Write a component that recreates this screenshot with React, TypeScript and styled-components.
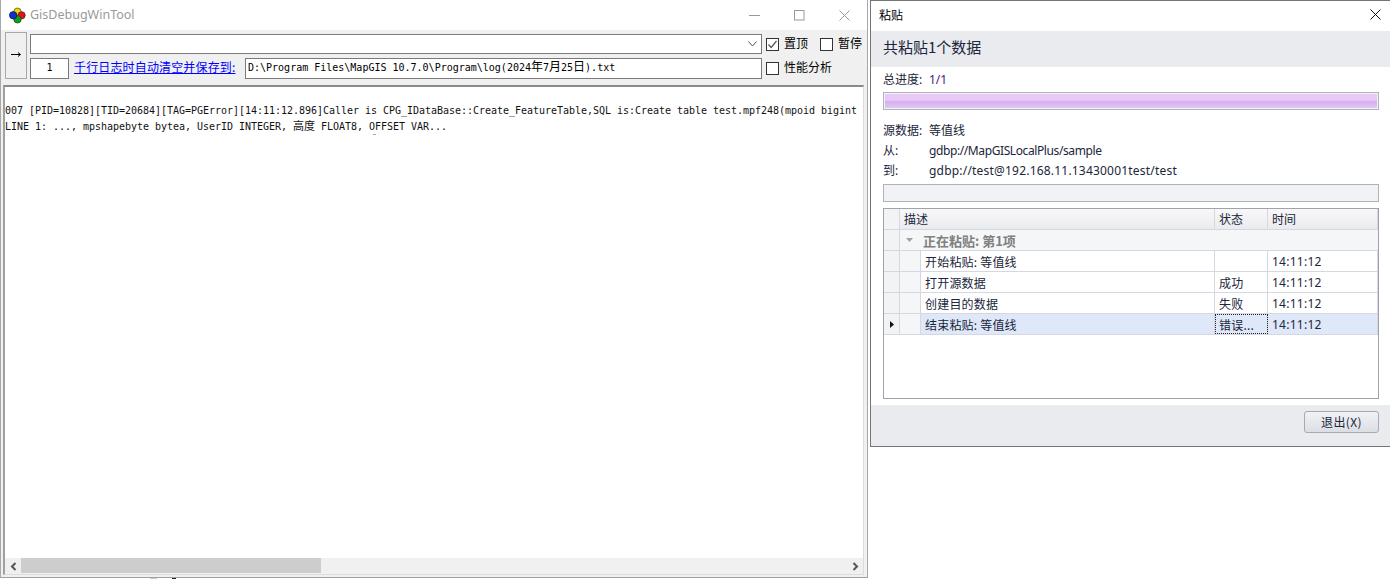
import React from "react";
import styled, { createGlobalStyle } from "styled-components";

const GlobalStyle = createGlobalStyle`
  html, body {
    margin: 0;
    padding: 0;
    background: #fff;
    overflow: hidden;
  }
  * {
    box-sizing: border-box;
  }
`;

const UI_FONT = `"Noto Sans", "Noto Sans CJK SC", sans-serif`;
const CJK_FONT = `"Noto Sans CJK SC", "Noto Sans", sans-serif`;
const MONO_FONT = `"DejaVu Sans Mono", "Noto Sans CJK SC", monospace`;

const Desktop = styled.div`
  position: relative;
  display: flex;
  align-items: flex-start;
  gap: 2px;
  width: 1390px;
  height: 579px;
  overflow: hidden;
  background: #fff;
`;

/* bits of whatever sits behind the window */
const BehindSpeck = styled.span<{ $left: number; $width: number; $color: string }>`
  position: absolute;
  top: 578px;
  left: ${(p) => p.$left}px;
  width: ${(p) => p.$width}px;
  height: 1px;
  background: ${(p) => p.$color};
`;

/* ---- debug tool window ---- */

const ToolWindow = styled.div`
  display: flex;
  flex-direction: column;
  width: 868px;
  height: 578px;
  border-left: 1px solid #a8a8a8;
  border-right: 1px solid #a8a8a8;
  border-bottom: 1px solid #a0a0a0;
  background: #f0f0f0;
  font-family: ${CJK_FONT};
`;

const TitleBar = styled.div`
  display: flex;
  align-items: center;
  flex: none;
  height: 30px;
  padding-left: 8px;
  background: #fff;
`;

const AppTitle = styled.span`
  margin-left: 4px;
  padding-bottom: 2px;
  font-family: ${UI_FONT};
  font-size: 12.5px;
  color: #9a9a9a;
`;

const WindowButtons = styled.div`
  display: flex;
  margin-left: auto;
  margin-right: 17px;
  gap: 34px;
`;

const Toolbar = styled.div`
  display: flex;
  flex: none;
  height: 55px;
  padding: 2px 0 0 4px;
  gap: 3px;
`;

const ArrowButton = styled.div`
  display: flex;
  align-items: center;
  justify-content: center;
  width: 22px;
  height: 47px;
  padding-bottom: 2px;
  border: 1px solid #a8a8a8;
  background: #f0f0f0;
`;

const ToolbarRows = styled.div`
  display: flex;
  flex-direction: column;
  gap: 4px;
  padding-top: 2px;
`;

const ToolbarRow = styled.div<{ $height: number }>`
  display: flex;
  align-items: center;
  height: ${(p) => p.$height}px;
`;

const FieldGroup = styled.div`
  display: flex;
  align-items: center;
  width: 732px;
  height: 100%;
  margin-right: 4px;
`;

const ComboBox = styled.div`
  display: flex;
  align-items: center;
  justify-content: flex-end;
  width: 100%;
  height: 100%;
  padding-right: 4px;
  border: 1px solid #7a7a7a;
  background: #fff;
`;

const CountInput = styled.div`
  flex: none;
  width: 39px;
  height: 100%;
  line-height: 17px;
  text-align: center;
  border: 1px solid #7a7a7a;
  background: #fff;
  font-family: ${MONO_FONT};
  font-size: 10px;
  color: #000;
`;

const SaveLink = styled.a`
  flex: none;
  width: 171px;
  margin-left: 5px;
  padding-bottom: 4px;
  font-size: 12px;
  line-height: 16px;
  letter-spacing: 0.15px;
  color: #0000ff;
  text-decoration: underline;
`;

const PathInput = styled.div`
  flex: 1;
  height: 100%;
  padding-left: 2px;
  line-height: 17px;
  border: 1px solid #7a7a7a;
  background: #fff;
  font-family: ${MONO_FONT};
  font-size: 10px;
  white-space: pre;
  color: #000;
`;

const CheckItem = styled.label<{ $gap?: number }>`
  display: flex;
  align-items: center;
  gap: 5px;
  margin-right: ${(p) => p.$gap ?? 0}px;
  font-size: 12px;
  color: #000;
`;

const CheckText = styled.span`
  padding-bottom: 4px;
`;

const CheckBox = styled.span`
  display: flex;
  align-items: center;
  justify-content: center;
  width: 13px;
  height: 13px;
  border: 1px solid #333;
  background: #fff;
`;

const LogFrame = styled.div`
  display: flex;
  flex-direction: column;
  flex: 1;
  min-height: 0;
  margin: 0 3px 2px 2px;
  border-top: 2px solid #8a8a8a;
  border-left: 2px solid #a0a0a0;
  border-right: 1px solid #dcdcdc;
  border-bottom: 1px solid #dcdcdc;
  background: #fff;
`;

const LogBody = styled.div`
  position: relative;
  flex: 1;
  padding-top: 16px;
  overflow: hidden;
  background: #fff;
`;

const LogLine = styled.div`
  height: 16px;
  line-height: 16px;
  font-family: ${MONO_FONT};
  font-size: 10px;
  letter-spacing: -0.02px;
  white-space: pre;
  color: #111;
`;

const CjkRun = styled.span`
  font-family: ${CJK_FONT};
  font-size: 12px;
  line-height: 1;
`;

const LogCjkRun = styled(CjkRun)`
  font-size: 11px;
`;

const LogSpeck = styled.span`
  position: absolute;
  top: 47px;
  left: 368px;
  width: 3px;
  height: 1px;
  background: #aaa;
`;

const ScrollBar = styled.div`
  display: flex;
  align-items: center;
  flex: none;
  height: 16px;
  background: #f0f0f0;
`;

const ScrollArrow = styled.div`
  display: flex;
  align-items: center;
  justify-content: center;
  flex: none;
  width: 16px;
  height: 100%;
`;

const ScrollTrack = styled.div`
  flex: 1;
  height: 100%;
  padding-bottom: 1px;
`;

const ScrollThumb = styled.div`
  width: 300px;
  height: 100%;
  background: #cdcdcd;
`;

/* ---- paste dialog ---- */

const Dialog = styled.div`
  display: flex;
  flex-direction: column;
  flex: none;
  width: 520px;
  height: 447px;
  border: 1px solid #747474;
  border-right: none;
  background: #fff;
  font-family: ${UI_FONT};
  font-size: 12px;
  color: #20263a;
`;

const DialogTitle = styled.div`
  display: flex;
  align-items: center;
  justify-content: space-between;
  flex: none;
  height: 30px;
  padding: 0 9px 3px 8px;
  font-family: ${CJK_FONT};
  font-size: 12px;
  color: #000;
`;

const Banner = styled.div`
  display: flex;
  align-items: center;
  flex: none;
  height: 36px;
  padding: 0 0 5px 12px;
  background: #e9ebef;
  font-family: ${CJK_FONT};
  font-size: 15px;
  color: #20263a;
`;

const DialogBody = styled.div`
  display: flex;
  flex-direction: column;
  flex: 1;
  padding: 3px 11px 6px 12px;
`;

const InfoLine = styled.div<{ $mt?: number }>`
  display: flex;
  height: 20px;
  margin-top: ${(p) => p.$mt ?? 0}px;
  line-height: 20px;
  white-space: pre;
`;

const InfoLabel = styled.span`
  flex: none;
  width: 46px;
`;

const ProgressCount = styled.span`
  color: #4a1a78;
`;

const InfoPath = styled.span<{ $spacing: number }>`
  letter-spacing: ${(p) => p.$spacing}px;
`;

const Progress = styled.div<{ $filled?: boolean }>`
  flex: none;
  height: 18px;
  margin-top: ${(p) => (p.$filled ? 2 : 3)}px;
  border: 1px solid #b0b2bc;
  padding: 1px;
  background: #f1f2f5;
`;

const ProgressFill = styled.div`
  height: 100%;
  background: linear-gradient(
    to bottom,
    #ebcaf9 0%,
    #e8c6f8 45%,
    #d3b0ea 55%,
    #dcbcf0 80%,
    #e4c8f4 100%
  );
`;

const GridBox = styled.div`
  flex: 1;
  margin-top: 6px;
  border: 1px solid #a0a2ac;
  background: #fff;
  font-family: ${CJK_FONT};
`;

const GridRow = styled.div<{ $selected?: boolean }>`
  display: grid;
  grid-template-columns: 16px 21px 294px 53px 1fr;
  height: 21px;
  border-bottom: 1px solid #d5d8e0;
  background: ${(p) => (p.$selected ? "#dfe8f9" : "#fff")};
`;

const HeaderRow = styled(GridRow)`
  background: linear-gradient(to bottom, #f8f8fa, #eaebee);
`;

const GroupRow = styled(GridRow)`
  grid-template-columns: 16px 1fr;
  background: #f5f6f8;
`;

const Indicator = styled.div`
  display: flex;
  align-items: center;
  justify-content: center;
  border-right: 1px solid #d5d8e0;
  background: #f2f3f5;
`;

const IndentCell = styled.div`
  border-right: 1px solid #d5d8e0;
  background: #f5f6f8;
`;

const HeaderCell = styled.div<{ $span?: number }>`
  grid-column: span ${(p) => p.$span ?? 1};
  padding-left: 4px;
  line-height: 20px;
  border-right: 1px solid #d5d8e0;
  color: #20263a;
`;

const GroupCell = styled.div`
  display: flex;
  align-items: center;
  gap: 10px;
  padding-left: 6px;
  font-size: 13px;
  font-weight: 700;
  color: #808080;
`;

const Cell = styled.div<{ $focused?: boolean; $time?: boolean }>`
  padding-left: 4px;
  line-height: 22px;
  overflow: hidden;
  white-space: nowrap;
  border-right: 1px solid #d5d8e0;
  outline: ${(p) => (p.$focused ? "1px dotted #222" : "none")};
  outline-offset: -1px;
  font-family: ${(p) => (p.$time ? UI_FONT : "inherit")};
  letter-spacing: ${(p) => (p.$time ? 0.25 : 0.2)}px;
  color: #20263a;
`;

const Footer = styled.div`
  display: flex;
  align-items: flex-start;
  justify-content: flex-end;
  flex: none;
  height: 41px;
  padding: 6px 11px 0 0;
  background: #e9ebef;
`;

const ExitButton = styled.div`
  width: 75px;
  height: 22px;
  line-height: 20px;
  text-align: center;
  border: 1px solid #a8aab2;
  border-radius: 3px;
  background: linear-gradient(to bottom, #f1f2f5, #dcdee5);
  font-family: ${CJK_FONT};
  letter-spacing: 0.4px;
  color: #20263a;
`;

const Logo = () => (
  <svg width="17" height="17" viewBox="0 0 17 17">
    <circle cx="8.5" cy="4.7" r="3.7" fill="#f2d500" stroke="#5a5a20" strokeWidth="0.8" />
    <circle cx="12.6" cy="8.3" r="3.6" fill="#e8101a" stroke="#5a2020" strokeWidth="0.8" />
    <circle cx="8.5" cy="12.3" r="3.7" fill="#0fa01a" stroke="#1a4a1a" strokeWidth="0.8" />
    <circle cx="4.2" cy="8.3" r="3.7" fill="#1230c8" stroke="#101a50" strokeWidth="0.8" />
  </svg>
);

const MinimizeIcon = () => (
  <svg width="11" height="11" viewBox="0 0 11 11" stroke="#999" fill="none">
    <path d="M0 5.5H11" />
  </svg>
);

const MaximizeIcon = () => (
  <svg width="11" height="11" viewBox="0 0 11 11" stroke="#999" fill="none">
    <rect x="0.5" y="0.5" width="9.5" height="9.5" />
  </svg>
);

const CloseIcon = ({ color = "#999" }: { color?: string }) => (
  <svg width="11" height="11" viewBox="0 0 11 11" stroke={color} fill="none">
    <path d="M0.5 0.5L10.5 10.5M10.5 0.5L0.5 10.5" />
  </svg>
);

const rows = [
  { desc: "开始粘贴: 等值线", status: "" },
  { desc: "打开源数据", status: "成功" },
  { desc: "创建目的数据", status: "失败" },
  { desc: "结束粘贴: 等值线", status: "错误...", selected: true },
];

const App: React.FC = () => {
  return (
    <Desktop>
      <GlobalStyle />
      <ToolWindow>
        <TitleBar>
          <Logo />
          <AppTitle>GisDebugWinTool</AppTitle>
          <WindowButtons>
            <MinimizeIcon />
            <MaximizeIcon />
            <CloseIcon />
          </WindowButtons>
        </TitleBar>
        <Toolbar>
          <ArrowButton>
            <svg width="12" height="7" viewBox="0 0 12 7" fill="none" stroke="#000">
              <path d="M1 3.5H10M8 1.5L10.5 3.5L8 5.5" />
            </svg>
          </ArrowButton>
          <ToolbarRows>
            <ToolbarRow $height={20}>
              <FieldGroup>
                <ComboBox>
                  <svg width="9" height="6" viewBox="0 0 9 6" fill="none" stroke="#555">
                    <path d="M0.5 0.5L4.5 5L8.5 0.5" />
                  </svg>
                </ComboBox>
              </FieldGroup>
              <CheckItem $gap={12}>
                <CheckBox>
                  <svg width="11" height="11" viewBox="0 0 11 11" fill="none" stroke="#555" strokeWidth="1.2">
                    <path d="M1.5 5.5L4.2 8.5L9.5 2" />
                  </svg>
                </CheckBox>
                <CheckText>置顶</CheckText>
              </CheckItem>
              <CheckItem>
                <CheckBox />
                <CheckText>暂停</CheckText>
              </CheckItem>
            </ToolbarRow>
            <ToolbarRow $height={21}>
              <FieldGroup>
                <CountInput>1</CountInput>
                <SaveLink>千行日志时自动清空并保存到:</SaveLink>
                <PathInput>
                  D:\Program Files\MapGIS 10.7.0\Program\log(2024<CjkRun>年</CjkRun>7<CjkRun>月</CjkRun>25<CjkRun>日</CjkRun>).txt
                </PathInput>
              </FieldGroup>
              <CheckItem>
                <CheckBox />
                <CheckText>性能分析</CheckText>
              </CheckItem>
            </ToolbarRow>
          </ToolbarRows>
        </Toolbar>
        <LogFrame>
          <LogBody>
            <LogLine>007 [PID=10828][TID=20684][TAG=PGError][14:11:12.896]Caller is CPG_IDataBase::Create_FeatureTable,SQL is:Create table test.mpf248(mpoid bigint</LogLine>
            <LogLine>
              LINE 1: ..., mpshapebyte bytea, UserID INTEGER, <LogCjkRun>高度</LogCjkRun> FLOAT8, OFFSET VAR...
            </LogLine>
            <LogSpeck />
          </LogBody>
          <ScrollBar>
            <ScrollArrow>
              <svg width="7" height="9" viewBox="0 0 7 9" fill="none" stroke="#555" strokeWidth="2">
                <path d="M5.5 1L2 4.5L5.5 8" />
              </svg>
            </ScrollArrow>
            <ScrollTrack>
              <ScrollThumb />
            </ScrollTrack>
            <ScrollArrow>
              <svg width="7" height="9" viewBox="0 0 7 9" fill="none" stroke="#555" strokeWidth="2">
                <path d="M1.5 1L5 4.5L1.5 8" />
              </svg>
            </ScrollArrow>
          </ScrollBar>
        </LogFrame>
      </ToolWindow>

      <Dialog>
        <DialogTitle>
          粘贴
          <CloseIcon color="#111" />
        </DialogTitle>
        <Banner>共粘贴1个数据</Banner>
        <DialogBody>
          <InfoLine>
            <InfoLabel>总进度:</InfoLabel>
            <ProgressCount>1/1</ProgressCount>
          </InfoLine>
          <Progress $filled>
            <ProgressFill />
          </Progress>
          <InfoLine $mt={11}>
            <InfoLabel>源数据:</InfoLabel>等值线
          </InfoLine>
          <InfoLine>
            <InfoLabel>从:</InfoLabel>
            <InfoPath $spacing={-0.4}>gdbp://MapGISLocalPlus/sample</InfoPath>
          </InfoLine>
          <InfoLine>
            <InfoLabel>到:</InfoLabel>
            <InfoPath $spacing={0.2}>gdbp://test@192.168.11.13430001test/test</InfoPath>
          </InfoLine>
          <Progress />
          <GridBox>
            <HeaderRow>
              <Indicator />
              <HeaderCell $span={2}>描述</HeaderCell>
              <HeaderCell>状态</HeaderCell>
              <HeaderCell>时间</HeaderCell>
            </HeaderRow>
            <GroupRow>
              <Indicator />
              <GroupCell>
                <svg width="7" height="4" viewBox="0 0 7 4">
                  <path d="M0 0H7L3.5 4Z" fill="#a0a0a0" />
                </svg>
                正在粘贴: 第1项
              </GroupCell>
            </GroupRow>
            {rows.map((row) => (
              <GridRow key={row.desc} $selected={row.selected}>
                <Indicator>
                  {row.selected && (
                    <svg width="4" height="7" viewBox="0 0 4 7">
                      <path d="M0 0L4 3.5L0 7Z" fill="#111" />
                    </svg>
                  )}
                </Indicator>
                <IndentCell />
                <Cell>{row.desc}</Cell>
                <Cell $focused={row.selected}>{row.status}</Cell>
                <Cell $time>14:11:12</Cell>
              </GridRow>
            ))}
          </GridBox>
        </DialogBody>
        <Footer>
          <ExitButton>退出(X)</ExitButton>
        </Footer>
      </Dialog>
      <BehindSpeck $left={150} $width={7} $color="#ccc" />
      <BehindSpeck $left={172} $width={4} $color="#222" />
    </Desktop>
  );
};

export default App;
